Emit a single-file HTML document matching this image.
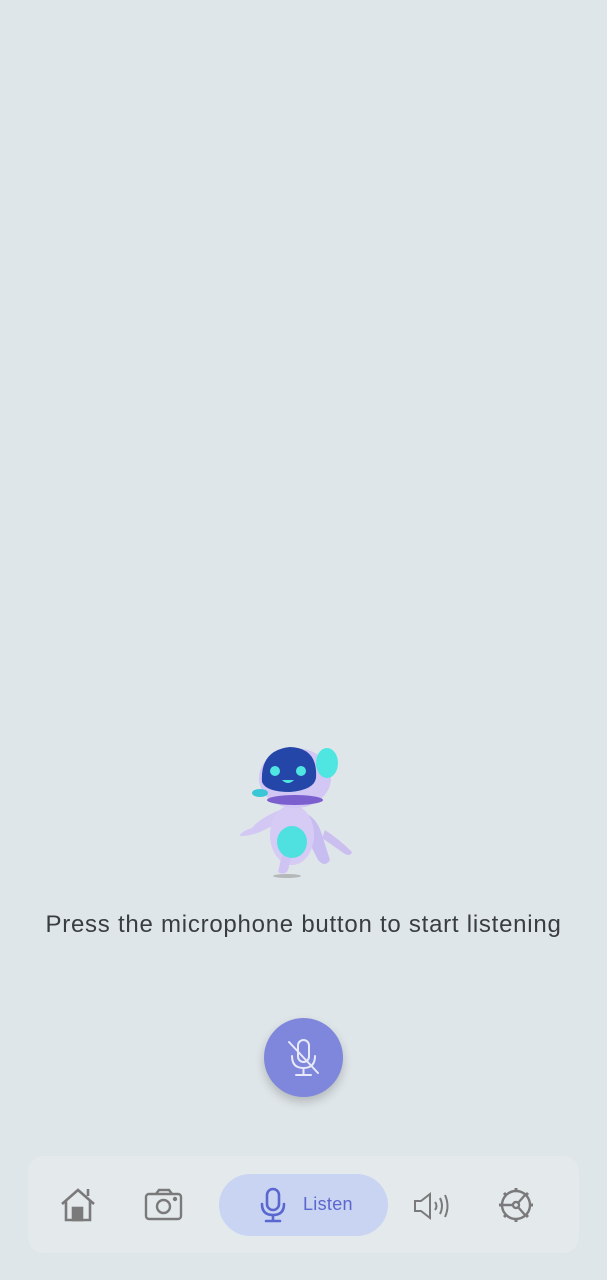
<!DOCTYPE html>
<html><head><meta charset="utf-8"><style>
html,body{margin:0;padding:0;width:607px;height:1280px;background:#dfe6e9;overflow:hidden;font-family:"Liberation Sans",sans-serif}
.msg{position:absolute;top:911px;left:0;width:607px;text-align:center;font-size:24px;color:#3a3d40;letter-spacing:0.75px;white-space:nowrap}
.mic{position:absolute;left:264px;top:1018px;width:79px;height:79px;border-radius:50%;background:#7f87dc;box-shadow:0 5px 10px rgba(0,0,0,0.2)}
.nav{position:absolute;left:28px;top:1156px;width:551px;height:97px;border-radius:16px;background:#e4eaec}
.pill{position:absolute;left:219px;top:1174px;width:169px;height:62px;border-radius:31px;background:#c9d4f2}
.lbl{position:absolute;left:303px;top:1194px;font-size:18px;color:#5a67cf;letter-spacing:0.3px}
svg{position:absolute}
</style></head><body>
<svg style="left:230px;top:740px" width="130" height="145" viewBox="0 0 130 145">
<ellipse cx="57" cy="136" rx="14" ry="2" fill="#999" opacity=".6"/>
<path d="M60 70 Q85 70 92 95 L100 120 Q95 128 88 120 L78 100 Z" fill="#c8bdf0"/>
<path d="M50 70 Q30 78 22 88 Q10 92 10 96 Q20 96 30 92 Q45 85 55 78Z" fill="#d3c8f3"/>
<path d="M95 90 Q110 100 122 112 Q120 118 112 112 L92 98Z" fill="#cbbff0"/>
<ellipse cx="62" cy="95" rx="22" ry="30" fill="#d6cbf5"/>
<path d="M52 115 L48 132 Q55 136 58 130 L62 115Z" fill="#cfc3f3"/>
<ellipse cx="62" cy="102" rx="15" ry="16" fill="#4fe0e0"/>
<ellipse cx="65" cy="38" rx="36" ry="30" fill="#d2c6f4"/>
<ellipse cx="97" cy="23" rx="11" ry="15" fill="#4fe6e2"/>
<path d="M32 42 Q30 10 60 7 Q88 8 86 38 Q84 50 60 52 Q36 52 32 42Z" fill="#2446a8"/>
<circle cx="45" cy="31" r="5" fill="#4fe6e2"/><circle cx="71" cy="31" r="5" fill="#4fe6e2"/>
<path d="M52 40 Q58 46 64 40Z" fill="#4fe6e2"/>
<ellipse cx="65" cy="60" rx="28" ry="5" fill="#7c5fcf"/>
<ellipse cx="30" cy="53" rx="8" ry="4" fill="#39c6d6"/>
</svg>
<div class="msg">Press the microphone button to start listening</div>
<div class="mic"></div>
<svg style="left:264px;top:1018px" width="79" height="79" viewBox="0 0 79 79" fill="none" stroke="#e8eafa" stroke-width="2" stroke-linecap="round">
<rect x="34" y="22" width="11" height="22" rx="5.5"/>
<path d="M28 38 Q28 50 39.5 50 Q51 50 51 38 M39.5 50 V57 M32 57 H47"/>
<path d="M25 24 L54 55"/>
</svg>
<div class="nav"></div>
<div class="pill"></div>
<svg style="left:58px;top:1186px" width="40" height="38" viewBox="0 0 40 38" fill="none" stroke="#7a7a7a" stroke-width="2.6">
<path d="M4 18 L20 4 L36 18 M8 15 V34 H32 V15 M30 10 V3"/>
<rect x="15" y="22" width="9" height="12" fill="#7a7a7a"/>
</svg>
<svg style="left:144px;top:1188px" width="40" height="34" viewBox="0 0 40 34" fill="none" stroke="#7a7a7a" stroke-width="2.4">
<rect x="2" y="6" width="35" height="25" rx="3"/><path d="M12 6 L15 2 H25 L28 6"/><circle cx="19.5" cy="18.5" r="6.5"/><circle cx="31" cy="11" r="1" fill="#7a7a7a"/>
</svg>
<svg style="left:258px;top:1187px" width="30" height="36" viewBox="0 0 30 36" fill="none" stroke="#5a67cf" stroke-width="2.6" stroke-linecap="round">
<rect x="9" y="2" width="12" height="21" rx="6"/><path d="M4 17 Q4 28 15 28 Q26 28 26 17 M15 28 V33 M8 34 H22"/>
</svg>
<div class="lbl">Listen</div>
<svg style="left:412px;top:1190px" width="40" height="32" viewBox="0 0 40 32" fill="none" stroke="#7a7a7a" stroke-width="2">
<path d="M3 11 H9 L18 4 V28 L9 21 H3Z"/><path d="M23 12 Q26 16 23 20 M28 8 Q32 16 28 24 M33 5 Q38 16 33 27"/>
</svg>
<svg style="left:497px;top:1186px" width="38" height="38" viewBox="0 0 38 38" fill="none" stroke="#7a7a7a" stroke-width="2.4">
<circle cx="19" cy="19" r="14"/><circle cx="19" cy="19" r="3"/>
<path d="M16 19 H6 M21 17 L28 9 M21 21 L28 29"/>
<g stroke-width="3"><path d="M19 2 V5 M19 33 V36 M2 19 H5 M33 19 H36 M7 7 L9 9 M29 29 L31 31 M7 31 L9 29 M29 9 L31 7"/></g>
</svg>
</body></html>
